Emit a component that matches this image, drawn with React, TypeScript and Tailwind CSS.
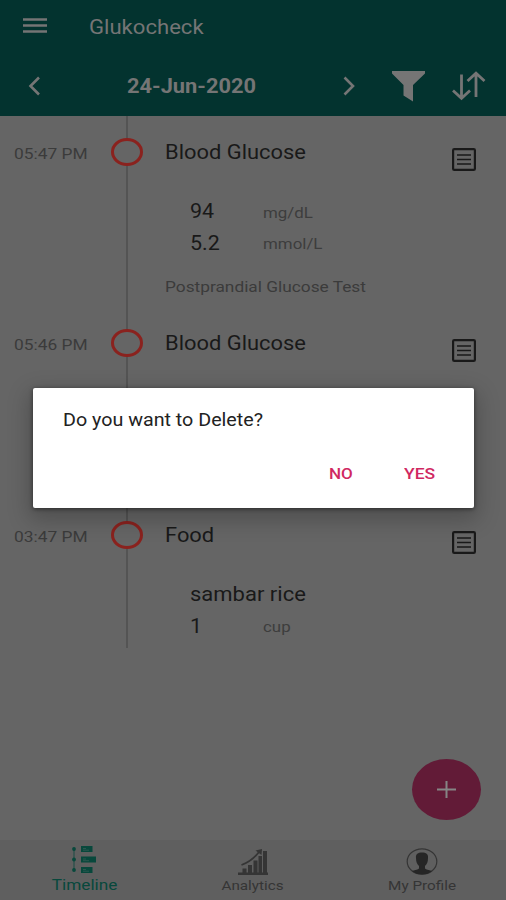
interface Measure {
  value: string;
  unit: string;
}

interface Entry {
  time: string;
  title: string;
  item?: string;
  measures: Measure[];
  note?: string;
}

const entries: Entry[] = [
  {
    time: '05:47 PM',
    title: 'Blood Glucose',
    measures: [
      { value: '94', unit: 'mg/dL' },
      { value: '5.2', unit: 'mmol/L' },
    ],
    note: 'Postprandial Glucose Test',
  },
  { time: '05:46 PM', title: 'Blood Glucose', measures: [] },
  {
    time: '03:47 PM',
    title: 'Food',
    item: 'sambar rice',
    measures: [{ value: '1', unit: 'cup' }],
  },
];

function NoteIcon() {
  return (
    <svg width="24" height="23" viewBox="0 0 24 23" fill="none" className="mt-[32px] text-[#191919]">
      <rect x="1.1" y="1.1" width="21.8" height="20.8" rx="1.2" stroke="currentColor" strokeWidth="2.2" />
      <path d="M5 7h14M5 11.5h14M5 16h14" stroke="currentColor" strokeWidth="1.7" />
    </svg>
  );
}

function TimelineRow({ entry, last }: { entry: Entry; last: boolean }) {
  return (
    <div className={`flex ${last ? 'h-[149px]' : 'h-[191.3px]'}`}>
      <div className="w-[111px] shrink-0 pl-[14px] pt-[28px] text-[15.5px] leading-5 text-[#3b3b3b]">
        <span className="inline-block origin-left scale-x-[1.12] whitespace-nowrap">{entry.time}</span>
      </div>

      {/* Rail with the open circle */}
      <div className="flex w-[32px] shrink-0 flex-col items-center">
        <div className="h-[22px] w-[1.5px] bg-[#545454]" />
        <div className="h-[28px] w-[32px] shrink-0 rounded-[50%] border-[3px] border-[#8a221e]" />
        <div className="w-[1.5px] flex-1 bg-[#545454]" />
      </div>

      <div className="min-w-0 flex-1 pl-[22px] pt-[24px]">
        <h2 className="text-[20px] leading-6 text-[#191919]">
          <span className="inline-block origin-left scale-x-[1.095] whitespace-nowrap">{entry.title}</span>
        </h2>
        <div className="pl-[25px] pt-[32px]">
          {entry.item && (
            <p className="h-[32px] text-[20px] leading-[30px] text-[#191919]">
              <span className="inline-block origin-left scale-x-[1.1] whitespace-nowrap">{entry.item}</span>
            </p>
          )}
          {entry.measures.map((m) => (
            <div key={m.unit} className="flex h-[31.5px] items-center">
              <span className="w-[73px] text-[19.5px] text-[#191919]">
                <span className="inline-block origin-left scale-x-[1.1]">{m.value}</span>
              </span>
              <span className="pt-[3px] text-[15.5px] text-[#3d3d3d]">
                <span className="inline-block origin-left scale-x-[1.09]">{m.unit}</span>
              </span>
            </div>
          ))}
        </div>
        {entry.note && (
          <p className="mt-[16px] text-[15.5px] leading-6 text-[#3b3b3b]">
            <span className="inline-block origin-left scale-x-[1.115] whitespace-nowrap">{entry.note}</span>
          </p>
        )}
      </div>

      <div className="w-[54px] shrink-0">
        <NoteIcon />
      </div>
    </div>
  );
}

function Header() {
  return (
    <header className="h-[116px] shrink-0 bg-[#03332f] text-[#757575]">
      <div className="flex h-[52px] items-center pl-[23px]">
        <svg width="24" height="16" viewBox="0 0 24 16" fill="none" stroke="currentColor" strokeWidth="2.4">
          <path d="M0 1.500h24M0 7.500h24M0 13.500h24" />
        </svg>
        <h1 className="pl-[42px] pt-px text-[20px]">
          <span className="inline-block origin-left scale-x-[1.105]">Glukocheck</span>
        </h1>
      </div>
      <div className="flex h-[68px] items-center pl-[28px]">
        <svg width="13" height="20" viewBox="0 0 13 20" fill="none" stroke="currentColor" strokeWidth="2.6">
          <path d="M11 1.500L2.500 10l8.500 8.500" />
        </svg>
        <div className="w-[302px] pl-[86px] pt-px text-[19.5px] font-bold">
          <span className="inline-block origin-left scale-x-[1.12] whitespace-nowrap">24-Jun-2020</span>
        </div>
        <svg width="13" height="20" viewBox="0 0 13 20" fill="none" stroke="currentColor" strokeWidth="2.6">
          <path d="M1.500 1.500L10 10l-8.500 8.500" />
        </svg>
        <svg width="34" height="31" viewBox="0 0 34 31" fill="currentColor" className="ml-[36px]">
          <path d="M0 0h33v2.500L21 14v16.500L11.500 24.500V14L0 2.500z" />
        </svg>
        <svg
          width="34"
          height="30"
          viewBox="0 0 34 30"
          fill="none"
          stroke="currentColor"
          strokeWidth="2.8"
          className="ml-[26px]"
        >
          <path d="M9.500 3.500v24M1 19.500l8.500 7.800 8.500-7.800M24 26V2.500M15.500 10L24 2.200l8.500 7.800" />
        </svg>
      </div>
    </header>
  );
}

function BottomNav() {
  return (
    <nav className="grid h-[60px] shrink-0 grid-cols-3 bg-[#5f5f5f] text-[#353535]">
      <div className="flex flex-col items-center pt-[6px] text-[#08483c]">
        <svg width="24" height="27" viewBox="0 0 24 27" fill="currentColor">
          <path d="M2 2v23" stroke="currentColor" strokeWidth="0.8" />
          <circle cx="2" cy="3" r="1.9" />
          <circle cx="2" cy="13.5" r="1.9" />
          <circle cx="2" cy="24" r="1.9" />
          <path d="M9 0h11.500v6H9zM9 10.500h15v6H9zM9 21h11.500v6H9z" />
          <path d="M11 2.500h3M11 4.200h6M11 13h3M11 14.700h6M11 23.500h3M11 25.200h6" stroke="#3c5f57" strokeWidth="0.7" />
        </svg>
        <span className="mt-[2px] scale-x-[1.11] text-[15.5px] leading-5">Timeline</span>
      </div>
      <div className="flex flex-col items-center pt-[9px]">
        <svg width="30" height="26" viewBox="0 0 30 26" fill="currentColor">
          <path d="M0 23.500h30V26H0zM4.500 19.500h4V24h-4zM10 16h4v8h-4zM15.500 11.500h4V24h-4zM20.500 7h3.500v17h-3.500zM25 2h4v22h-4z" />
          <path d="M3.500 16Q14 12 21 3" fill="none" stroke="currentColor" strokeWidth="1.8" />
          <path d="M17.500 1.500L24 0l-.5 6z" />
        </svg>
        <span className="mt-[1px] scale-x-[1.13] text-[13.5px] leading-[18px]">Analytics</span>
      </div>
      <div className="flex flex-col items-center pt-[8px]">
        <svg width="32" height="27" viewBox="0 0 32 27">
          <ellipse cx="16" cy="13.5" rx="14.8" ry="12.7" fill="none" stroke="currentColor" strokeWidth="1.2" />
          <path
            d="M10 10c-.5-4 2-5.500 6-5.500s6.500 1.500 6 5.500c0 4-1 6-3 8v2.500c2 1.500 5 1.500 7 2.500-3 2.500-6 3.500-10 3.500s-7-1-10-3.500c2-1 5-1 7-2.500V18c-2-2-3-4-3-8z"
            fill="#262626"
          />
        </svg>
        <span className="mt-px scale-x-[1.13] text-[13.5px] leading-[18px]">My Profile</span>
      </div>
    </nav>
  );
}

function DeleteDialog() {
  return (
    <div className="absolute left-[33px] top-[388px] flex h-[120px] w-[441px] flex-col justify-between rounded-[2px] bg-white pb-[22px] pt-[20px] shadow-[0_8px_22px_4px_rgba(0,0,0,0.22),0_1px_4px_rgba(0,0,0,0.5)]">
      <p className="pl-[30px] text-[17.5px] leading-6 text-[#222222]">
        <span className="inline-block origin-left scale-x-[1.125] whitespace-nowrap">Do you want to Delete?</span>
      </p>
      <div className="flex text-[15.5px] font-medium leading-6 text-[#d02861]">
        <button className="ml-[296px] w-[75px] text-left">
          <span className="inline-block origin-left scale-x-[1.1]">NO</span>
        </button>
        <button className="text-left">
          <span className="inline-block origin-left scale-x-[1.13]">YES</span>
        </button>
      </div>
    </div>
  );
}

export default function App() {
  return (
    <div className="relative flex h-[900px] w-[506px] flex-col overflow-hidden bg-[#656565] font-['Roboto',sans-serif]">
      <Header />
      <main className="flex-1">
        {entries.map((entry, i) => (
          <TimelineRow key={entry.time} entry={entry} last={i === entries.length - 1} />
        ))}
      </main>
      <BottomNav />

      <button className="absolute left-[412px] top-[759px] flex h-[61px] w-[69px] items-center justify-center rounded-[50%] bg-[#621b37] text-[#858585]">
        <svg width="19" height="17" viewBox="0 0 19 17" stroke="currentColor" strokeWidth="2">
          <path d="M9.500 0v17M0 8.500h19" />
        </svg>
      </button>
      <DeleteDialog />
    </div>
  );
}
